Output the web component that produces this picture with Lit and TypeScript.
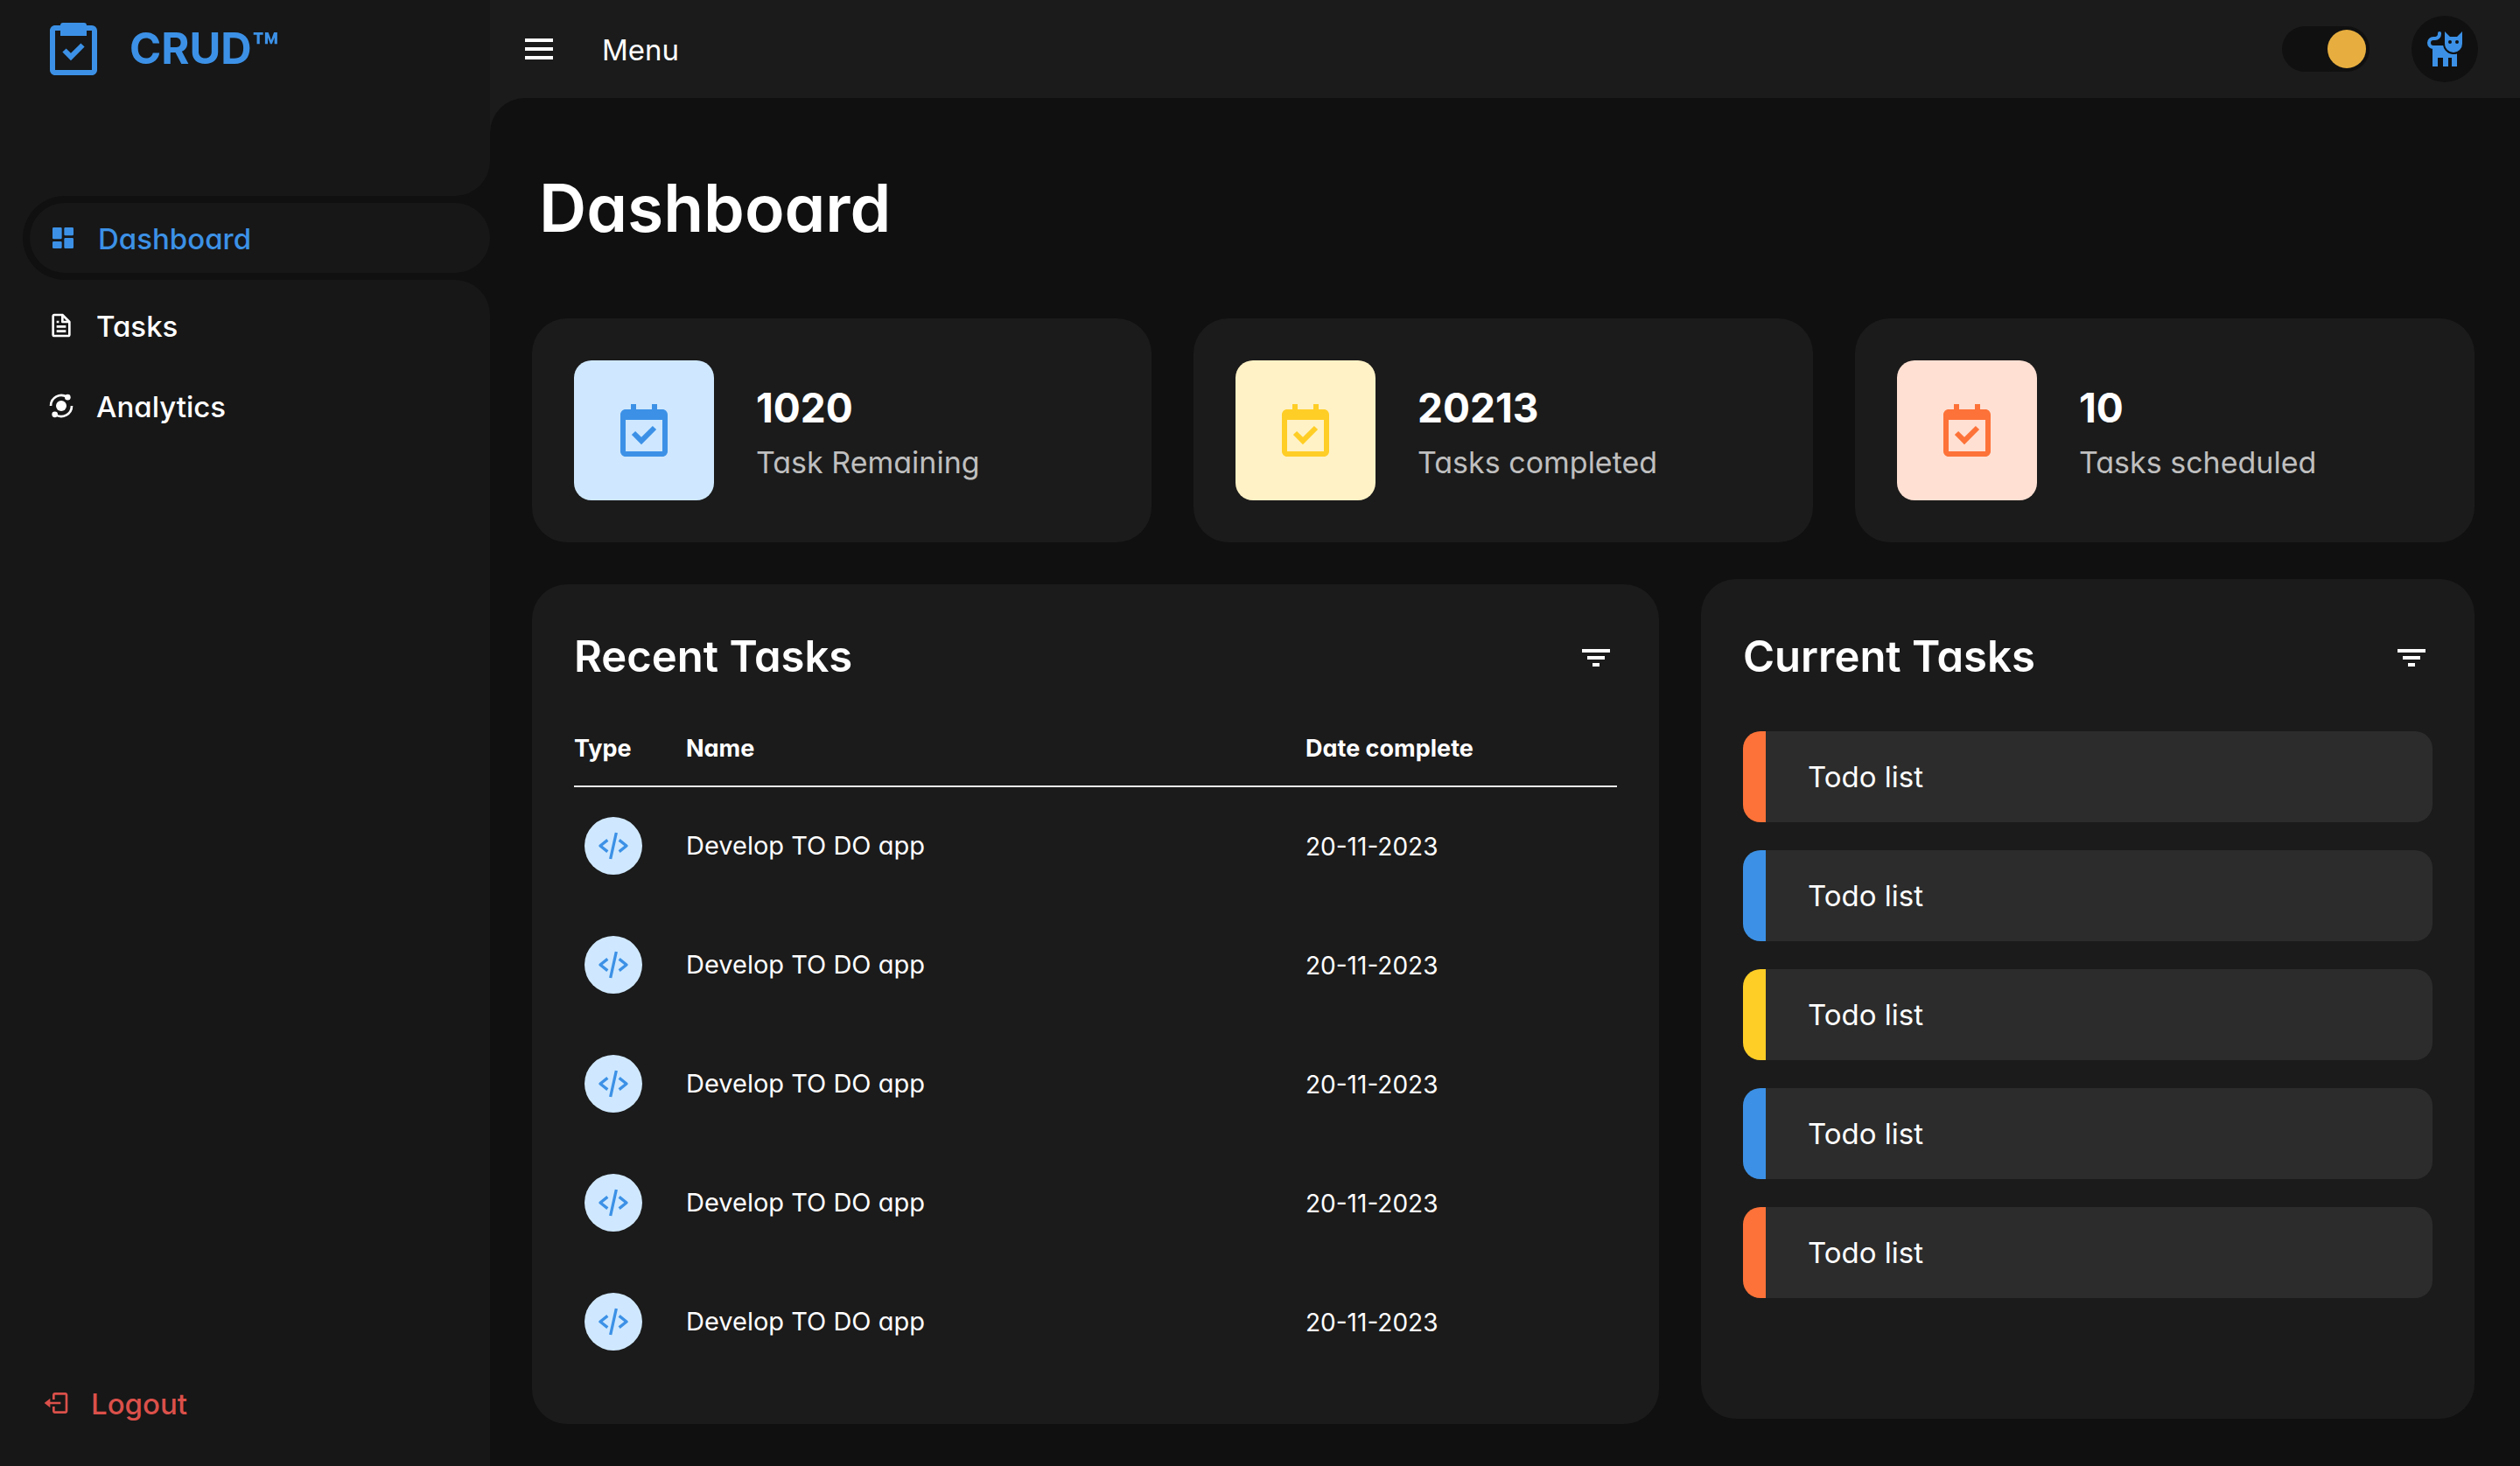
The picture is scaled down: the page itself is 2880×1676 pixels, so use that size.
import { LitElement, html, css, svg } from "lit";
import { customElement, state } from "lit/decorators.js";
import { styleMap } from "lit/directives/style-map.js";

const icons = {
  task: svg`<path d="M5 22h14c1.103 0 2-.897 2-2V5a2 2 0 0 0-2-2h-2a1 1 0 0 0-1-1H8a1 1 0 0 0-1 1H5c-1.103 0-2 .897-2 2v15c0 1.103.897 2 2 2zM5 5h2v2h10V5h2v15H5V5z"/><path d="m11 13.586-1.793-1.793-1.414 1.414L11 16.414l5.207-5.207-1.414-1.414z"/>`,
  dashboard: svg`<path d="M4 13h6a1 1 0 0 0 1-1V4a1 1 0 0 0-1-1H4a1 1 0 0 0-1 1v8a1 1 0 0 0 1 1zm-1 7a1 1 0 0 0 1 1h6a1 1 0 0 0 1-1v-4a1 1 0 0 0-1-1H4a1 1 0 0 0-1 1v4zm10 0a1 1 0 0 0 1 1h6a1 1 0 0 0 1-1v-7a1 1 0 0 0-1-1h-6a1 1 0 0 0-1 1v7zm1-10h6a1 1 0 0 0 1-1V4a1 1 0 0 0-1-1h-6a1 1 0 0 0-1 1v5a1 1 0 0 0 1 1z"/>`,
  file: svg`<path d="M19.903 8.586a.997.997 0 0 0-.196-.293l-6-6a.997.997 0 0 0-.293-.196c-.03-.014-.062-.022-.094-.033a.991.991 0 0 0-.259-.051C13.04 2.011 13.021 2 13 2H6c-1.103 0-2 .897-2 2v16c0 1.103.897 2 2 2h12c1.103 0 2-.897 2-2V9c0-.021-.011-.04-.013-.062a.952.952 0 0 0-.051-.259c-.01-.032-.019-.063-.033-.093zM16.586 8H14V5.414L16.586 8zM6 20V4h6v5a1 1 0 0 0 1 1h5l.002 10H6z"/><path d="M8 12h8v2H8zm0 4h8v2H8zm0-8h2v2H8z"/>`,
  analyse: svg`<circle cx="12" cy="12" r="4.5"/><circle cx="17.5" cy="4.6" r="2.5"/><circle cx="6.5" cy="19.4" r="2.5"/><path d="M3 12a9 9 0 0 1 14-7.5M21 12a9 9 0 0 1-14 7.5" fill="none" stroke="currentColor" stroke-width="2"/>`,
  logout: svg`<path d="m2 12 5 4v-3h9v-2H7V8z"/><path d="M20 3h-9c-1.103 0-2 .897-2 2v4h2V5h9v14h-9v-4H9v4c0 1.103.897 2 2 2h9c1.103 0 2-.897 2-2V5c0-1.103-.897-2-2-2z"/>`,
  menu: svg`<path d="M4 6h16v2H4zm0 5h16v2H4zm0 5h16v2H4z"/>`,
  cat: svg`<path d="M9 3v.5A2.5 2.5 0 0 1 6.5 6h-1a2.5 2.5 0 0 0 0 5H7" fill="none" stroke="currentColor" stroke-width="2" stroke-linecap="round"/><path d="M5 10h6.1a6 6 0 0 0 7.9 4.7V22h-3v-5h-2v5h-3v-5H8v5H5z"/><path fill-rule="evenodd" d="M12 2l3 3h4l3-3v7a5 5 0 0 1-10 0zm3 5a1 1 0 1 0 0 2 1 1 0 0 0 0-2zm4 0a1 1 0 1 0 0 2 1 1 0 0 0 0-2z"/>`,
  calendar: svg`<path d="M7 2v2H5c-1.103 0-2 .897-2 2v14c0 1.103.897 2 2 2h14c1.103 0 2-.897 2-2V6c0-1.103-.897-2-2-2h-2V2h-2v2H9V2H7zm12 18H5V8h14v12z"/><path d="m11 17.414 5.707-5.707-1.414-1.414L11 14.586l-2.293-2.293-1.414 1.414z"/>`,
  filter: svg`<path d="M7 11h10v2H7zM4 7h16v2H4zm6 8h4v2h-4z"/>`,
  code: svg`<path d="m7.375 16.781 1.25-1.562L4.601 12l4.024-3.219-1.25-1.562-5 4a1 1 0 0 0 0 1.562l5 4zm9.25-9.562-1.25 1.562L19.399 12l-4.024 3.219 1.25 1.562 5-4a1 1 0 0 0 0-1.562l-5-4zm-1.649-4.003-4 18-1.953-.434 4-18z"/>`,
};

const icon = (name: keyof typeof icons, size: number) =>
  html`<svg width=${size} height=${size} viewBox="0 0 24 24" fill="currentColor" aria-hidden="true">${icons[name]}</svg>`;

const BLUE = "#3c91e6";
const YELLOW = "#ffce26";
const ORANGE = "#fd7238";

const stats = [
  { value: "1020", label: "Task Remaining", color: BLUE, tint: "#cfe8ff" },
  { value: "20213", label: "Tasks completed", color: YELLOW, tint: "#fff2c6" },
  { value: "10", label: "Tasks scheduled", color: ORANGE, tint: "#ffe0d3" },
];

const recent = Array.from({ length: 5 }, () => ({ name: "Develop TO DO app", date: "20-11-2023" }));

const todos = [ORANGE, BLUE, YELLOW, BLUE, ORANGE].map((color) => ({ color, text: "Todo list" }));

@customElement("app-root")
export class AppRoot extends LitElement {
  @state() private dark = true;

  static styles = css`
    :host {
      --page: #101010;
      --side: #171717;
      --panel: #1b1b1b;
      --blue: #3c91e6;
      display: grid;
      grid-template-columns: 560px 1fr;
      min-height: 100vh;
      background: var(--page);
      color: #fff;
      font-family: Inter, "Open Sans", sans-serif;
      font-feature-settings: "cv11";
      font-size: 33px;
      line-height: 48px;
    }
    * {
      box-sizing: border-box;
    }
    svg {
      display: block;
      flex: none;
    }
    a {
      color: inherit;
      text-decoration: none;
    }
    ul {
      list-style: none;
      margin: 0;
      padding: 0;
    }
    h1,
    h2,
    p {
      margin: 0;
    }
    button {
      padding: 0;
      border: 0;
      background: none;
      color: inherit;
      cursor: pointer;
    }

    .sidebar {
      display: flex;
      flex-direction: column;
    }
    .side-top {
      height: 224px;
      background: var(--side);
      border-bottom-right-radius: 40px;
    }
    .brand {
      display: flex;
      align-items: center;
      gap: 28px;
      height: 112px;
      padding-left: 48px;
      color: var(--blue);
      font-size: 49px;
      font-weight: 700;
    }
    .active-row {
      background: var(--side);
      padding-left: 26px;
    }
    .active-slot {
      padding: 8px 0 8px 8px;
      background: var(--page);
      border-radius: 48px 0 0 48px;
    }
    .link {
      display: flex;
      align-items: center;
      gap: 24px;
      height: 92px;
      padding-left: 54px;
      font-weight: 500;
    }
    .link span,
    .menu-label {
      padding-top: 2px;
    }
    .link.active {
      height: 80px;
      padding-left: 22px;
      border-radius: 40px;
      background: var(--side);
      color: var(--blue);
    }
    .side-rest {
      flex: 1;
      display: flex;
      flex-direction: column;
      justify-content: space-between;
      padding: 6px 0 26px;
      background: var(--side);
      border-top-right-radius: 40px;
    }
    .link.logout {
      padding-left: 48px;
      color: #db504a;
    }

    .content {
      display: flex;
      flex-direction: column;
      min-width: 0;
      background: var(--panel);
    }
    .topbar {
      display: flex;
      align-items: center;
      gap: 48px;
      height: 112px;
      padding: 0 48px 0 32px;
    }
    .menu-label {
      flex: 1;
    }
    .switch {
      appearance: none;
      display: flex;
      width: 100px;
      height: 52px;
      margin: 0;
      padding: 4px;
      border-radius: 26px;
      background: var(--page);
      cursor: pointer;
    }
    .switch::before {
      content: "";
      width: 44px;
      height: 44px;
      border-radius: 50%;
      background: #e7ae3f;
    }
    .switch:checked {
      justify-content: flex-end;
    }
    .avatar {
      display: grid;
      place-items: center;
      width: 76px;
      height: 76px;
      border-radius: 50%;
      background: var(--page);
      color: var(--blue);
    }

    main {
      flex: 1;
      padding: 72px 52px 48px 48px;
      background: var(--page);
      border-top-left-radius: 40px;
    }
    h1 {
      padding-left: 8px;
      font-size: 75px;
      line-height: 108px;
      font-weight: 600;
    }
    .stats {
      display: grid;
      grid-template-columns: repeat(3, 1fr);
      gap: 48px;
      margin-top: 72px;
    }
    .stat {
      display: flex;
      align-items: center;
      gap: 48px;
      padding: 48px;
      border-radius: 40px;
      background: var(--panel);
    }
    .stat-icon {
      display: grid;
      place-items: center;
      width: 160px;
      height: 160px;
      border-radius: 20px;
    }
    .stat-value {
      margin-bottom: 4px;
      font-size: 46px;
      line-height: 70px;
      font-weight: 700;
    }
    .stat-label {
      color: #bfbfbf;
      font-size: 34px;
    }

    .panels {
      display: grid;
      grid-template-columns: 1288fr 884fr;
      gap: 48px;
      margin-top: 42px;
    }
    .panel {
      padding: 48px;
      border-radius: 40px;
      background: var(--panel);
    }
    .recent {
      margin-top: 6px;
    }
    .current {
      padding-top: 54px;
      margin-bottom: 6px;
    }
    .panel-head {
      display: flex;
      align-items: center;
      justify-content: space-between;
      margin-bottom: 48px;
    }
    h2 {
      padding-bottom: 2px;
      font-size: 49px;
      line-height: 70px;
      font-weight: 600;
    }
    table {
      width: 100%;
      border-collapse: separate;
      border-spacing: 0;
      table-layout: fixed;
    }
    .col-type {
      width: 128px;
    }
    .col-date {
      width: 356px;
    }
    th {
      padding: 0 0 22px;
      border-bottom: 2px solid #eee;
      font-size: 27px;
      line-height: 40px;
      font-weight: 700;
      text-align: left;
    }
    td {
      height: 136px;
      padding: 0 0 2px;
      font-size: 29px;
      line-height: 42px;
      vertical-align: middle;
    }
    .date {
      padding: 0;
      font-size: 28px;
    }
    .badge {
      display: grid;
      place-items: center;
      width: 66px;
      height: 66px;
      margin-left: 12px;
      border-radius: 50%;
      background: #cfe8ff;
      color: var(--blue);
    }
    .todos {
      display: grid;
      gap: 32px;
    }
    .todo {
      display: flex;
      align-items: center;
      height: 104px;
      border-radius: 20px;
      overflow: hidden;
      background: #2c2c2c;
    }
    .todo-bar {
      align-self: stretch;
      width: 26px;
      margin-right: 48px;
    }
  `;

  private toggle = () => {
    this.dark = !this.dark;
  };

  private head(title: string) {
    return html`<div class="panel-head">
      <h2>${title}</h2>
      <button type="button" aria-label="Filter">${icon("filter", 48)}</button>
    </div>`;
  }

  render() {
    return html`
      <nav class="sidebar">
        <div class="side-top">
          <a class="brand" href="#">${icon("task", 72)}<span>CRUD™</span></a>
        </div>
        <div class="active-row">
          <div class="active-slot">
            <a class="link active" href="#dashboard">${icon("dashboard", 32)}<span>Dashboard</span></a>
          </div>
        </div>
        <div class="side-rest">
          <ul>
            <li><a class="link" href="#tasks">${icon("file", 32)}<span>Tasks</span></a></li>
            <li><a class="link" href="#analytics">${icon("analyse", 32)}<span>Analytics</span></a></li>
          </ul>
          <a class="link logout" href="#logout">${icon("logout", 32)}<span>Logout</span></a>
        </div>
      </nav>
      <div class="content">
        <header class="topbar">
          <button type="button" aria-label="Toggle sidebar">${icon("menu", 48)}</button>
          <span class="menu-label">Menu</span>
          <input class="switch" type="checkbox" aria-label="Dark mode" .checked=${this.dark} @change=${this.toggle} />
          <a class="avatar" href="#profile" aria-label="Profile">${icon("cat", 48)}</a>
        </header>
        <main>
          <h1>Dashboard</h1>
          <ul class="stats">
            ${stats.map(
              (s) => html`<li class="stat">
                <span class="stat-icon" style=${styleMap({ background: s.tint, color: s.color })}>${icon("calendar", 72)}</span>
                <div>
                  <p class="stat-value">${s.value}</p>
                  <p class="stat-label">${s.label}</p>
                </div>
              </li>`
            )}
          </ul>
          <div class="panels">
            <section class="panel recent">
              ${this.head("Recent Tasks")}
              <table>
                <thead>
                  <tr>
                    <th class="col-type">Type</th>
                    <th>Name</th>
                    <th class="col-date">Date complete</th>
                  </tr>
                </thead>
                <tbody>
                  ${recent.map(
                    (r) => html`<tr>
                      <td><span class="badge">${icon("code", 40)}</span></td>
                      <td>${r.name}</td>
                      <td class="date">${r.date}</td>
                    </tr>`
                  )}
                </tbody>
              </table>
            </section>
            <section class="panel current">
              ${this.head("Current Tasks")}
              <ul class="todos">
                ${todos.map(
                  (t) => html`<li class="todo">
                    <span class="todo-bar" style=${styleMap({ background: t.color })}></span>
                    <span>${t.text}</span>
                  </li>`
                )}
              </ul>
            </section>
          </div>
        </main>
      </div>
    `;
  }
}
